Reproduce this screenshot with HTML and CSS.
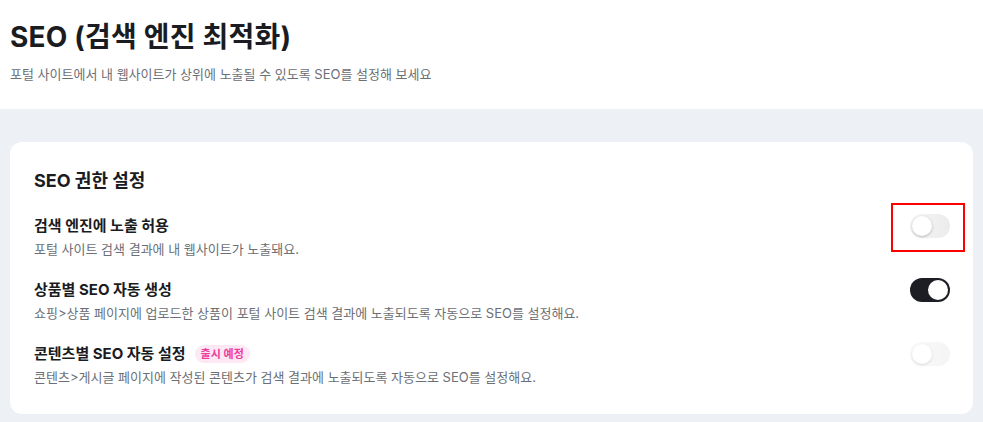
FILE: index.html
```html
<!DOCTYPE html>
<html lang="ko">
<head>
    <meta charset="UTF-8">
    <meta name="viewport" content="width=device-width, initial-scale=1.0">
    <title>SEO (검색 엔진 최적화)</title>
    <link rel="stylesheet" href="styles.css">
</head>
<body>

<header class="page-head">
    <h1>SEO (검색 엔진 최적화)</h1>
    <p>포털 사이트에서 내 웹사이트가 상위에 노출될 수 있도록 SEO를 설정해 보세요</p>
</header>

<main class="content">
    <section class="card">
        <h2>SEO 권한 설정</h2>
        <ul class="setting-list">
            <li class="setting">
                <div class="setting-text">
                    <h3>검색 엔진에 노출 허용</h3>
                    <p>포털 사이트 검색 결과에 내 웹사이트가 노출돼요.</p>
                </div>
                <label class="switch is-marked">
                    <input type="checkbox">
                    <span class="slider"></span>
                </label>
            </li>
            <li class="setting">
                <div class="setting-text">
                    <h3>상품별 SEO 자동 생성</h3>
                    <p>쇼핑&gt;상품 페이지에 업로드한 상품이 포털 사이트 검색 결과에 노출되도록 자동으로 SEO를 설정해요.</p>
                </div>
                <label class="switch">
                    <input type="checkbox" checked>
                    <span class="slider"></span>
                </label>
            </li>
            <li class="setting">
                <div class="setting-text">
                    <h3>콘텐츠별 SEO 자동 설정 <span class="badge">출시 예정</span></h3>
                    <p>콘텐츠&gt;게시글 페이지에 작성된 콘텐츠가 검색 결과에 노출되도록 자동으로 SEO를 설정해요.</p>
                </div>
                <label class="switch">
                    <input type="checkbox" disabled>
                    <span class="slider"></span>
                </label>
            </li>
        </ul>
    </section>
</main>

</body>
</html>
```

FILE: styles.css
```css
body {
    font-family: Inter, "Noto Sans CJK KR", sans-serif;
    margin: 0;
    padding: 0;
    background-color: #fff;
    color: #1a1c21;
}
.page-head {
    padding: 19px 10px 25px;
    background: #fff;
}
.page-head h1 {
    margin: 0 0 9px;
    font-size: 28px;
    line-height: 36px;
    font-weight: 700;
    letter-spacing: 0.2px;
}
.page-head p {
    margin: 0;
    font-size: 13px;
    line-height: 20px;
    color: #6b6f76;
}
.content {
    background-color: #edf0f4;
    padding: 33px 10px 9px;
}
.card {
    background: #fff;
    border-radius: 12px;
    padding: 26px 23px 27px 24px;
}
.card h2 {
    margin: 0 0 21px;
    font-size: 18px;
    line-height: 26px;
    font-weight: 700;
}
.setting-list {
    list-style: none;
    margin: 0;
    padding: 0;
    display: flex;
    flex-direction: column;
    gap: 20px;
}
.setting {
    display: flex;
    justify-content: space-between;
    align-items: flex-start;
}
.setting-text h3 {
    margin: 0 0 2px;
    font-size: 15px;
    line-height: 22px;
    font-weight: 700;
    display: flex;
    align-items: center;
    gap: 9px;
}
.setting-text p {
    margin: 0;
    font-size: 13px;
    line-height: 20px;
    color: #6b6f76;
}
.badge {
    display: inline-block;
    font-size: 11px;
    line-height: 18px;
    font-weight: 600;
    color: #ee3c9c;
    background-color: #fde8f4;
    padding: 0 6px;
    border-radius: 9px;
}
.switch {
    position: relative;
    display: block;
    width: 40px;
    height: 24px;
    margin-top: -1px;
    flex-shrink: 0;
    cursor: pointer;
}
.switch input {
    display: none;
}
.slider {
    position: absolute;
    inset: 0;
    border-radius: 12px;
    background: linear-gradient(90deg, #f7f7f7, #ebebeb);
}
.slider::before {
    content: "";
    position: absolute;
    top: 2px;
    left: 2px;
    width: 20px;
    height: 20px;
    border-radius: 50%;
    background: #fff;
    box-shadow: 0 1px 3px rgba(0, 0, 0, 0.25);
}
.switch input:checked + .slider {
    background: #1c1e24;
}
.switch input:checked + .slider::before {
    left: 18px;
    box-shadow: none;
}
.switch input:disabled + .slider {
    opacity: 0.5;
    cursor: default;
}
.switch.is-marked::after {
    content: "";
    position: absolute;
    top: -11px;
    bottom: -14px;
    left: -19px;
    right: -15px;
    border: 2px solid #f00;
}
```
